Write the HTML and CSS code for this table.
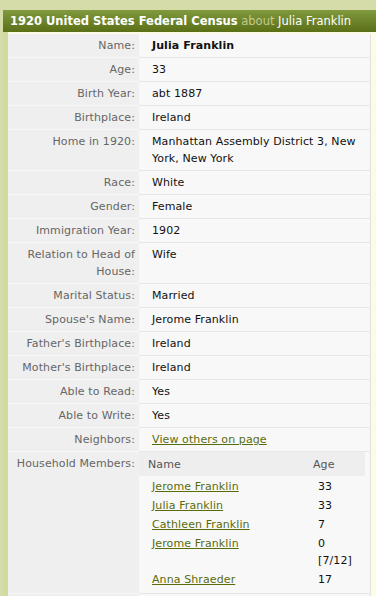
FILE: index.html
```html
<!DOCTYPE html>
<html>
<head>
<meta charset="utf-8">
<link rel="stylesheet" href="styles.css">
</head>
<body>
<div class="panel">
  <div class="title"><b>1920 United States Federal Census</b> <span class="about">about</span> Julia Franklin</div>
  <div class="content">
    <table class="record">
      <tr><th>Name:</th><td><b>Julia Franklin</b></td></tr>
      <tr><th>Age:</th><td>33</td></tr>
      <tr><th>Birth Year:</th><td>abt 1887</td></tr>
      <tr><th>Birthplace:</th><td>Ireland</td></tr>
      <tr><th>Home in 1920:</th><td>Manhattan Assembly District 3, New York, New York</td></tr>
      <tr><th>Race:</th><td>White</td></tr>
      <tr><th>Gender:</th><td>Female</td></tr>
      <tr><th>Immigration Year:</th><td>1902</td></tr>
      <tr><th>Relation to Head of House:</th><td>Wife</td></tr>
      <tr><th>Marital Status:</th><td>Married</td></tr>
      <tr><th>Spouse's Name:</th><td>Jerome Franklin</td></tr>
      <tr><th>Father's Birthplace:</th><td>Ireland</td></tr>
      <tr><th>Mother's Birthplace:</th><td>Ireland</td></tr>
      <tr><th>Able to Read:</th><td>Yes</td></tr>
      <tr><th>Able to Write:</th><td>Yes</td></tr>
      <tr><th>Neighbors:</th><td><a href="#">View others on page</a></td></tr>
      <tr><th>Household Members:</th><td class="nested-cell">
        <table class="household">
          <tr class="hh-head"><th class="c-name">Name</th><th class="c-age">Age</th></tr>
          <tr><td class="c-name"><a href="#">Jerome Franklin</a></td><td class="c-age">33</td></tr>
          <tr><td class="c-name"><a href="#">Julia Franklin</a></td><td class="c-age">33</td></tr>
          <tr><td class="c-name"><a href="#">Cathleen Franklin</a></td><td class="c-age">7</td></tr>
          <tr><td class="c-name"><a href="#">Jerome Franklin</a></td><td class="c-age">0 [7/12]</td></tr>
          <tr><td class="c-name"><a href="#">Anna Shraeder</a></td><td class="c-age">17</td></tr>
        </table>
      </td></tr>
      <tr><th>&nbsp;</th><td>&nbsp;</td></tr>
    </table>
  </div>
</div>
</body>
</html>
```
FILE: styles.css
```css
html, body {
  margin: 0;
  padding: 0;
}
body {
  background: #d6dca9;
  font-family: "DejaVu Sans", Verdana, sans-serif;
  font-size: 11px;
  color: #111;
  overflow: hidden;
}
.panel {
  margin: 10px 0 0 3px;
}
.title {
  height: 22px;
  line-height: 22px;
  padding-left: 7px;
  background: linear-gradient(#809a3e, #5a6f17);
  color: #fff;
  font-size: 11.5px;
  white-space: nowrap;
}
.title b {
  font-weight: bold;
}
.about {
  color: #c7c98d;
}
.content {
  border-left: 5px solid #d3daa0;
  background: #fdfae6;
  padding-top: 2px;
  padding-right: 5px;
}
.record {
  width: 363px;
  border-collapse: collapse;
  border-right: 1px solid #e2e2da;
}
.record > tbody > tr > th {
  width: 132px;
  box-sizing: border-box;
  background: #efefef;
  color: #666;
  font-weight: normal;
  text-align: right;
  vertical-align: top;
  padding: 3px 4px 3px 4px;
  line-height: 17px;
  letter-spacing: 0.1px;
  border-bottom: 1px solid #f8f8f8;
}
.record > tbody > tr > td {
  background: #f8f8f8;
  vertical-align: top;
  padding: 3px 6px 3px 13px;
  line-height: 17px;
  letter-spacing: 0.1px;
  border-bottom: 1px solid #e6e6e6;
}
.record > tbody > tr > td.nested-cell {
  padding: 0 5px 0 0;
}
a {
  color: #586c0c;
  text-decoration: underline;
}
.household {
  width: 226px;
  border-collapse: collapse;
}
.household th {
  background: #eeeeee;
  color: #555;
  font-weight: normal;
  text-align: left;
  line-height: 17px;
  padding: 4px 0 3px 9px;
}
.household td {
  line-height: 17px;
  padding: 1px 0 1px 13px;
  vertical-align: top;
}
.household .c-name {
  width: 166px;
  box-sizing: border-box;
}
.household .c-age {
  width: 60px;
  box-sizing: border-box;
}
.household th.c-age {
  padding-left: 8px;
}
.household td.c-age {
  padding-right: 7px;
}
.household tr:nth-child(2) td {
  padding-top: 2px;
}
.household tr:last-child td {
  padding-bottom: 5px;
}
```
